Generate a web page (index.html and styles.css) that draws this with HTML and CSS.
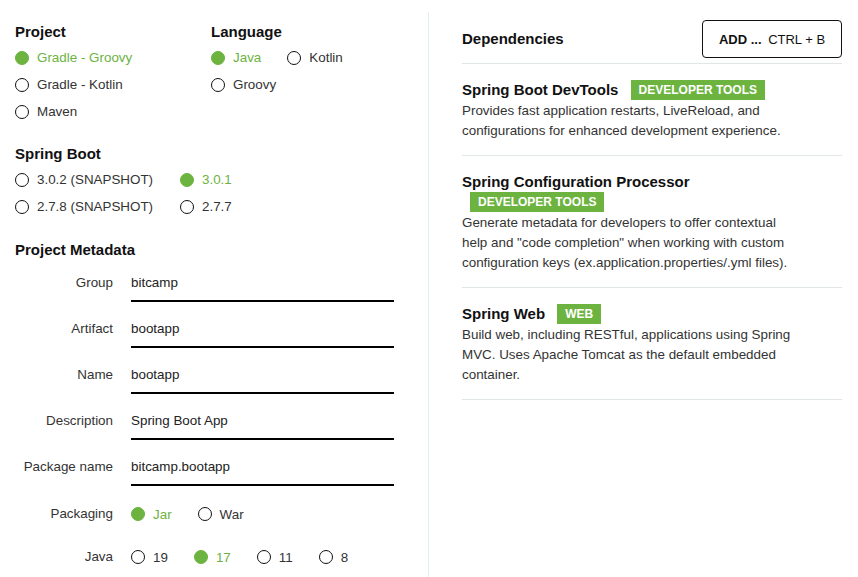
FILE: index.html
```html
<!DOCTYPE html>
<html>
<head>
<meta charset="utf-8">
<link rel="stylesheet" href="styles.css">
</head>
<body>
<div class="page">
  <div class="left">
    <div class="top-row">
      <section class="group group-project">
        <h2>Project</h2>
        <div class="options">
          <label class="opt checked"><span class="dot"></span>Gradle - Groovy</label>
          <label class="opt"><span class="dot"></span>Gradle - Kotlin</label>
          <label class="opt"><span class="dot"></span>Maven</label>
        </div>
      </section>
      <section class="group group-lang">
        <h2>Language</h2>
        <div class="options">
          <label class="opt checked"><span class="dot"></span>Java</label>
          <label class="opt"><span class="dot"></span>Kotlin</label>
          <label class="opt"><span class="dot"></span>Groovy</label>
        </div>
      </section>
    </div>
    <section class="group group-boot">
      <h2>Spring Boot</h2>
      <div class="options boot-grid">
        <label class="opt"><span class="dot"></span>3.0.2 (SNAPSHOT)</label>
        <label class="opt checked"><span class="dot"></span>3.0.1</label>
        <label class="opt"><span class="dot"></span>2.7.8 (SNAPSHOT)</label>
        <label class="opt"><span class="dot"></span>2.7.7</label>
      </div>
    </section>
    <section class="group group-meta">
      <h2>Project Metadata</h2>
      <div class="fields">
        <div class="field"><span class="flabel">Group</span><span class="input">bitcamp</span></div>
        <div class="field"><span class="flabel">Artifact</span><span class="input">bootapp</span></div>
        <div class="field"><span class="flabel">Name</span><span class="input">bootapp</span></div>
        <div class="field"><span class="flabel">Description</span><span class="input">Spring Boot App</span></div>
        <div class="field"><span class="flabel">Package name</span><span class="input">bitcamp.bootapp</span></div>
        <div class="field radio-field"><span class="flabel">Packaging</span>
          <div class="options inline">
            <label class="opt checked"><span class="dot"></span>Jar</label>
            <label class="opt"><span class="dot"></span>War</label>
          </div>
        </div>
        <div class="field radio-field java"><span class="flabel">Java</span>
          <div class="options inline">
            <label class="opt"><span class="dot"></span>19</label>
            <label class="opt checked"><span class="dot"></span>17</label>
            <label class="opt"><span class="dot"></span>11</label>
            <label class="opt"><span class="dot"></span>8</label>
          </div>
        </div>
      </div>
    </section>
  </div>
  <div class="right">
    <div class="deps-head">
      <h2>Dependencies</h2>
      <button class="add-btn"><strong>ADD ...</strong> <span>CTRL + B</span></button>
    </div>
    <div class="dep">
      <div class="dep-title">Spring Boot DevTools <span class="badge">Developer Tools</span></div>
      <p class="dep-desc">Provides fast application restarts, LiveReload, and configurations for enhanced development experience.</p>
    </div>
    <div class="dep">
      <div class="dep-title">Spring Configuration Processor <span class="badge">Developer Tools</span></div>
      <p class="dep-desc">Generate metadata for developers to offer contextual help and "code completion" when working with custom configuration keys (ex.application.properties/.yml files).</p>
    </div>
    <div class="dep">
      <div class="dep-title">Spring Web <span class="badge">Web</span></div>
      <p class="dep-desc">Build web, including RESTful, applications using Spring MVC. Uses Apache Tomcat as the default embedded container.</p>
    </div>
  </div>
</div>
</body>
</html>
```

FILE: styles.css
```css
* { box-sizing: border-box; }
html, body { margin: 0; padding: 0; background: #fff; }
body {
  font-family: "Liberation Sans", Arial, sans-serif;
  font-size: 13.4px;
  color: #222;
  width: 858px;
  height: 577px;
  overflow: hidden;
}
.page {
  display: flex;
  height: 577px;
}
.left {
  width: 429px;
  flex: none;
  padding: 11px 0 0 15px;
  border-right: 1px solid #e4eeec;
  margin-top: 12px;
}
h2 {
  margin: 0 0 3px;
  font-size: 15px;
  line-height: 18px;
  font-weight: bold;
  color: #111;
}
.top-row { display: flex; }
.group-project { width: 196px; }
.group-lang { width: 200px; }
.options {
  display: flex;
  flex-wrap: wrap;
  column-gap: 26px;
}
.group-project .options { flex-direction: column; }
.opt {
  display: flex;
  align-items: center;
  height: 27px;
  color: #333;
  white-space: nowrap;
}
.opt.checked { color: #6db33f; }
.dot {
  width: 14px;
  height: 14px;
  border-radius: 50%;
  border: 1.5px solid #111;
  margin-right: 8px;
  flex: none;
}
.opt.checked .dot { background: #6db33f; border-color: #6db33f; }
.group-boot { margin-top: 20px; }
.boot-grid {
  display: grid;
  grid-template-columns: 165px auto;
  column-gap: 0;
}
.group-meta { margin-top: 21px; }
.fields { margin-top: 14px; }
.field {
  display: flex;
  align-items: flex-start;
  margin-bottom: 17px;
}
.flabel {
  width: 98px;
  text-align: right;
  margin-right: 18px;
  line-height: 20px;
  color: #333;
  flex: none;
}
.input {
  width: 263px;
  line-height: 20px;
  padding-bottom: 7px;
  border-bottom: 2px solid #000;
  color: #222;
}
.radio-field { align-items: center; margin-bottom: 21px; }
.radio-field .flabel { line-height: 22px; }
.radio-field .opt { height: 22px; }
.inline { flex-wrap: nowrap; }

.right {
  flex: 1;
  padding: 20px 16px 0 33px;
}
.deps-head {
  display: flex;
  justify-content: space-between;
  align-items: center;
  padding-bottom: 5px;
  border-bottom: 1px solid #e1e7e6;
}
.deps-head h2 { margin: 0; }
.add-btn {
  width: 140px;
  height: 38px;
  background: #fff;
  border: 1px solid #111;
  border-radius: 4px;
  font-family: "Liberation Sans", Arial, sans-serif;
  font-size: 13px;
  color: #111;
  padding: 0;
  text-align: center;
}
.add-btn strong { font-weight: bold; margin-right: 3px; }
.dep {
  padding: 16px 0 14px;
  border-bottom: 1px solid #e1e7e6;
}
.dep-title {
  max-width: 340px;
  font-size: 15px;
  font-weight: bold;
  line-height: 20px;
  color: #111;
}
.badge {
  display: inline-block;
  vertical-align: top;
  margin-left: 8px;
  background: #6db33f;
  color: #fff;
  font-size: 12px;
  line-height: 20px;
  height: 20px;
  padding: 0 8px;
  text-transform: uppercase;
  font-weight: bold;
}
.dep-desc {
  margin: 1px 0 0;
  max-width: 340px;
  line-height: 20px;
  color: #333;
}
```
